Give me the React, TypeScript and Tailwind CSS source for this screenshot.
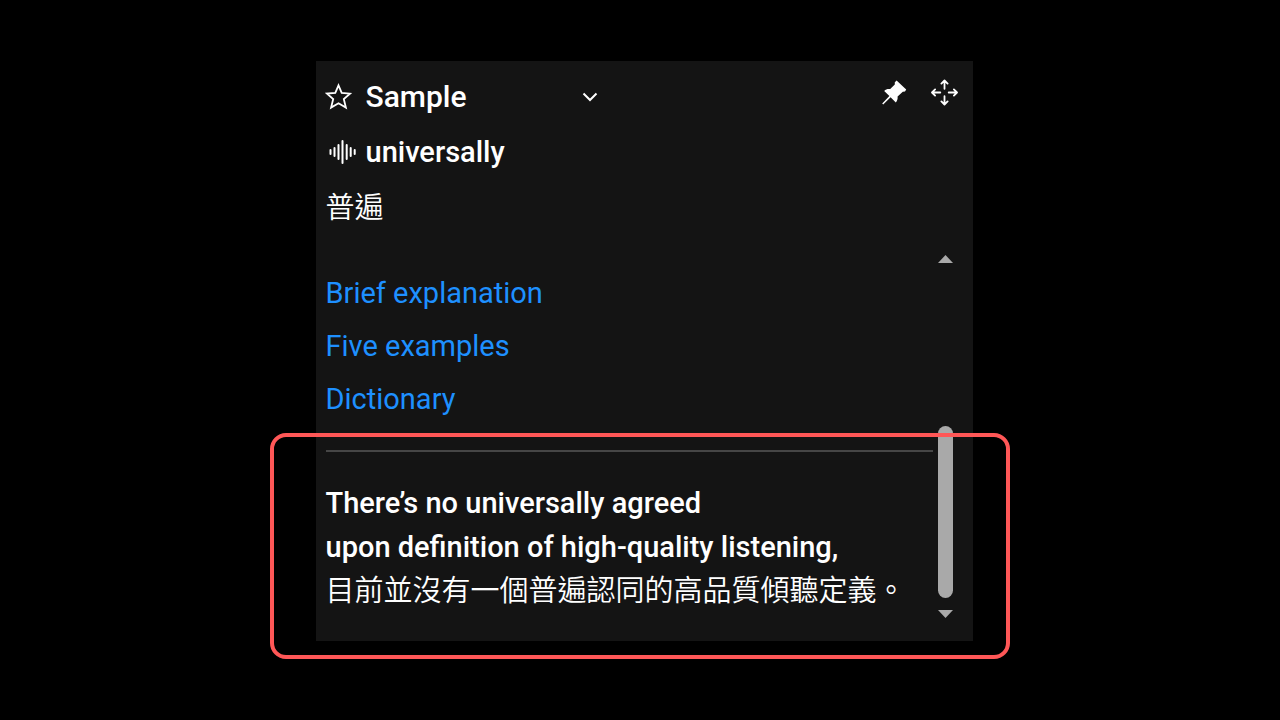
import React from "react";

const links = ["Brief explanation", "Five examples", "Dictionary"];

function StarIcon() {
  return (
    <svg viewBox="0 0 28 28" className="h-7 w-7" fill="none" stroke="currentColor" strokeWidth="1.8" strokeLinejoin="miter">
      <path d="M13.5 2.4 L16.7 9.9 L25 10.6 L18.8 16 L20.9 24.6 L13.5 20.3 L6.1 24.6 L8.2 16 L2 10.6 L10.3 9.9 Z" />
    </svg>
  );
}

function WaveIcon() {
  return (
    <svg viewBox="0 0 28 28" className="h-7 w-7" fill="none" stroke="currentColor" strokeWidth="2" strokeLinecap="round">
      <path d="M1.5 12v4M5.5 10v8M9.5 7v14M13.5 3v22M17.7 7v14M21.7 10v8M25.7 12v4" />
    </svg>
  );
}

function PinIcon() {
  return (
    <svg viewBox="0 0 28 28" className="h-7 w-7" fill="currentColor">
      <path d="M16.6 1.6L26.2 10.6L25 12.4L22.8 12.8L17.6 17.6C17.9 20 17.2 22 15.8 23.4L10.6 18.3L3.2 25.4L2.2 24.4L9.4 17L4.2 12C5.8 10.2 7.8 9.8 10.2 10.1L14.8 5.4L14.8 3.3Z" />
    </svg>
  );
}

function MoveIcon() {
  return (
    <svg viewBox="0 0 28 28" className="h-7 w-7" fill="none" stroke="currentColor" strokeWidth="1.8" strokeLinecap="round" strokeLinejoin="round">
      <path d="M14.5 9.8V2M11.4 4.6L14.5 1.5L17.6 4.6M14.5 17.2V25M11.4 22.4L14.5 25.5L17.6 22.4M10.3 13.5H2.5M5.1 10.4L2 13.5L5.1 16.6M18.7 13.5H26.5M23.9 10.4L27 13.5L23.9 16.6" />
    </svg>
  );
}

export default function App() {
  return (
    <main className="flex min-h-screen items-start justify-center bg-black pt-[61px] pb-10 pl-2 font-['Roboto','Noto_Sans_CJK_TC',sans-serif] text-[29px] text-white">
      <section className="relative w-full max-w-[657px] bg-[#141414] pt-2 pr-5 pb-[23px] pl-[10px]">
        <header className="flex h-[55px] items-center">
          <button type="button" aria-label="Favorite" className="-ml-px w-[41px]">
            <StarIcon />
          </button>
          <div className="relative w-[240px]">
            <select aria-label="Profile" className="w-full appearance-none bg-transparent text-[30px] leading-[55px] font-medium outline-none">
              <option>Sample</option>
            </select>
            <svg viewBox="0 0 16 10" className="pointer-events-none absolute top-1/2 right-2 h-[10px] w-4 -translate-y-1/2" fill="none" stroke="currentColor" strokeWidth="2">
              <path d="M1.5 1.5L8 8L14.5 1.5" />
            </svg>
          </div>
          <div className="ml-auto flex h-full items-center gap-[22px] pb-2">
            <button type="button" aria-label="Pin">
              <PinIcon />
            </button>
            <button type="button" aria-label="Move" className="-mr-[5px]">
              <MoveIcon />
            </button>
          </div>
        </header>

        <div className="flex h-[55px] items-center">
          <button type="button" aria-label="Listen" className="w-[40px] pl-[3px]">
            <WaveIcon />
          </button>
          <h1 className="leading-[56px] font-medium">universally</h1>
        </div>
        <p lang="zh-Hant" className="h-[55px] leading-[58px] font-[350]">普遍</p>

        <div className="mt-[21px] flex gap-[5px]">
          <div className="min-w-0 flex-1 pt-3 pb-[5px]">
            <nav className="flex flex-col items-start leading-[53px] text-[#1e90ff]">
              {links.map((label) => (
                <a key={label} href="#">
                  {label}
                </a>
              ))}
            </nav>
            <hr className="mt-6 border-t-2 border-[#464646]" />
            <div className="mt-[29px] leading-[44px] font-medium">
              <p>
                There’s no universally agreed
                <br />
                upon definition of high-quality listening,
              </p>
              <p lang="zh-Hant" className="font-[350]">
                目前並沒有一個普遍認同的高品質傾聽定義。
              </p>
            </div>
          </div>
          <div className="flex w-[15px] flex-col text-[#a9a9a9]">
            <button type="button" aria-label="Scroll up">
              <svg viewBox="0 0 15 8" className="block h-2 w-full" fill="currentColor">
                <path d="M7.5 0L15 8H0Z" />
              </svg>
            </button>
            <div className="mb-3 flex flex-1 flex-col justify-end">
              <div className="h-[172px] rounded-full bg-[#a9a9a9]" />
            </div>
            <button type="button" aria-label="Scroll down">
              <svg viewBox="0 0 15 8" className="block h-2 w-full" fill="currentColor">
                <path d="M0 0H15L7.5 8Z" />
              </svg>
            </button>
          </div>
        </div>

        <div className="pointer-events-none absolute top-[372px] -right-[37px] -bottom-[18px] -left-[46px] rounded-2xl border-4 border-[#ff5757]" />
      </section>
    </main>
  );
}
